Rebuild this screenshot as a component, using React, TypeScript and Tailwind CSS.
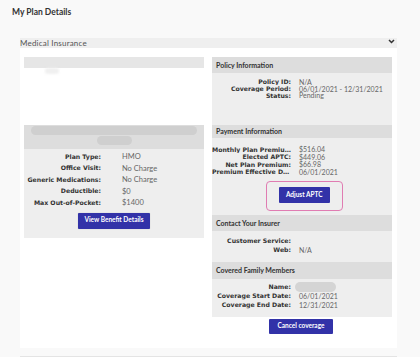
import React from "react";

const Row = ({ label, value, h }: { label: string; value?: React.ReactNode; h: string }) => (
  <div className={`flex items-center ${h}`}>
    <div className="w-[79px] shrink-0 min-w-0 overflow-hidden text-ellipsis whitespace-nowrap text-right font-['DejaVu_Sans',sans-serif] font-bold text-[6.2px] text-[#333]">
      {label}
    </div>
    <div className="pl-[8px] text-[#666] whitespace-nowrap">{value}</div>
  </div>
);

const PlanRow = ({ label, value }: { label: string; value: string }) => (
  <div className="flex items-center h-[11.5px]">
    <div className="w-[77px] shrink-0 text-right font-['DejaVu_Sans',sans-serif] font-bold text-[6.2px] text-[#333] whitespace-nowrap">
      {label}
    </div>
    <div className="pl-[21px] text-[#666] text-[7.5px]">{value}</div>
  </div>
);

const App = () => {
  return (
    <div className="w-[420px] h-[357px] bg-[#f9f9f9] overflow-hidden font-['Lato',sans-serif] text-[7px] leading-none">
      <div className="h-[38px] pl-[12px] pt-[8px] text-[8.5px] font-bold text-[#333]">My Plan Details</div>
      <div className="ml-[20px] w-[377px]">
        <div className="h-[10px] bg-[#efefef] flex items-center justify-between text-[8px] tracking-[0.2px] text-[#555]">
          <span>Medical Insurance</span>
          <svg width="7" height="5" viewBox="0 0 7 5" className="mr-[2px] -mt-[3px]">
            <path d="M1 1 L3.5 3.5 L6 1" fill="none" stroke="#333" strokeWidth="1.5" />
          </svg>
        </div>
        <div className="h-[300px] bg-white flex gap-[8px] pl-[4px] pt-[9px]">
          {/* left card */}
          <div className="w-[180px] flex flex-col self-start">
            <div className="h-[11px] bg-[#e6e6e6]" />
            <div className="h-[57px] bg-white relative">
              <div className="absolute left-[21px] top-[0px] w-[14px] h-[6px] rounded-full bg-[#f0f0f0] blur-[1px]" />
            </div>
            <div className="h-[24px] bg-[#dddddd] flex flex-col items-center pt-[1px] gap-[1px]">
              <div className="w-[166px] h-[9px] rounded-full bg-[#cfcfcf] blur-[0.5px]" />
              <div className="w-[35px] h-[9px] rounded-full bg-[#cfcfcf] blur-[0.5px]" />
            </div>
            <div className="bg-[#eeeeee] pt-[2px] pb-[9px] flex flex-col">
              <PlanRow label="Plan Type:" value="HMO" />
              <PlanRow label="Office Visit:" value="No Charge" />
              <PlanRow label="Generic Medications:" value="No Charge" />
              <PlanRow label="Deductible:" value="$0" />
              <PlanRow label="Max Out-of-Pocket:" value="$1400" />
              <div className="flex justify-center mt-[4px]">
                <button className="w-[72px] h-[16px] bg-[#3232a8] text-white font-bold text-[6.5px] rounded-[1px] shadow-[0_0_1px_rgba(0,0,0,0.3)]">
                  View Benefit Details
                </button>
              </div>
            </div>
          </div>
          {/* right column */}
          <div className="w-[180px] flex flex-col">
            <div className="h-[16px] bg-[#dddddd] pl-[4px] font-bold text-[#333] flex items-center">Policy Information</div>
            <div className="h-[52px] bg-[#eeeeee] pt-[6px] flex flex-col">
              <Row h="h-[6.7px]" label="Policy ID:" value="N/A" />
              <Row h="h-[6.7px]" label="Coverage Period:" value="06/01/2021 - 12/31/2021" />
              <Row h="h-[6.7px]" label="Status:" value="Pending" />
            </div>
            <div className="h-[13px] bg-[#dddddd] pl-[4px] font-bold text-[#333] flex items-center">Payment Information</div>
            <div className="h-[77px] bg-[#eeeeee] pt-[8px] flex flex-col">
              <Row h="h-[7.6px]" label="Monthly Plan Premium:" value="$516.04" />
              <Row h="h-[7.6px]" label="Elected APTC:" value="$449.06" />
              <Row h="h-[7.6px]" label="Net Plan Premium:" value="$66.98" />
              <Row h="h-[7.6px]" label="Premium Effective Date:" value="06/01/2021" />
              <div className="flex justify-center mt-[5px] ml-[5px]">
                <div className="border-[1.5px] border-[#e07cb2] rounded-[4px] pl-[11.5px] pr-[12px] pt-[5px] pb-[7px]">
                  <button className="w-[51px] h-[16px] bg-[#3232a8] text-white font-bold text-[6.5px] rounded-[1px]">
                    Adjust APTC
                  </button>
                </div>
              </div>
            </div>
            <div className="h-[16px] bg-[#dddddd] pl-[4px] font-bold text-[#333] flex items-center">Contact Your Insurer</div>
            <div className="h-[31px] bg-[#eeeeee] pt-[7px] flex flex-col gap-[1.5px]">
              <Row h="h-[7px]" label="Customer Service:" value="" />
              <Row h="h-[7px]" label="Web:" value="N/A" />
            </div>
            <div className="h-[17px] bg-[#dddddd] pl-[4px] font-bold text-[#333] flex items-center">Covered Family Members</div>
            <div className="h-[38px] bg-[#eeeeee] pt-[3px] flex flex-col">
              <Row h="h-[10px]" label="Name:" value={<span className="block -ml-[4px] w-[41px] h-[10px] rounded-full bg-[#d4d4d4] blur-[0.5px]" />} />
              <Row h="h-[9px]" label="Coverage Start Date:" value="06/01/2021" />
              <Row h="h-[9px]" label="Coverage End Date:" value="12/31/2021" />
            </div>
            <div className="flex justify-center mt-[2px] mr-[2px]">
              <button className="w-[64px] h-[15px] bg-[#3232a8] text-white font-bold text-[6.5px] rounded-[1px]">
                Cancel coverage
              </button>
            </div>
          </div>
        </div>
        <div className="h-[8px]" />
        <div className="h-[1px] bg-[#e4e4e4]" />
      </div>
    </div>
  );
};

export default App;
